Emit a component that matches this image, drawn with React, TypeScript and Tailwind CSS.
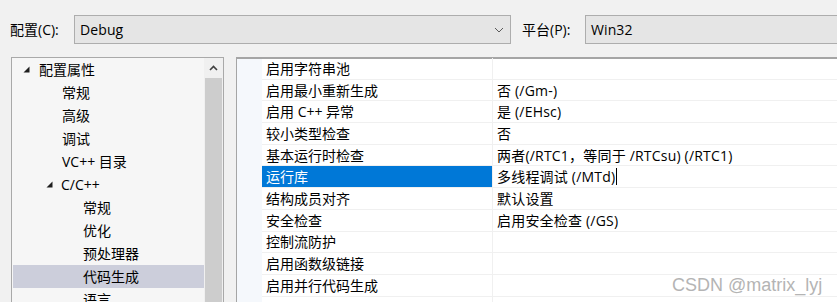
import React from 'react';

const FONT = { fontFamily: '"Open Sans", "Noto Sans CJK SC", sans-serif' };

type TreeItem = { label: string; level: number; open?: boolean; selected?: boolean };

const tree: TreeItem[] = [
  { label: '配置属性', level: 0, open: true },
  { label: '常规', level: 1 },
  { label: '高级', level: 1 },
  { label: '调试', level: 1 },
  { label: 'VC++ 目录', level: 1 },
  { label: 'C/C++', level: 1, open: true },
  { label: '常规', level: 2 },
  { label: '优化', level: 2 },
  { label: '预处理器', level: 2 },
  { label: '代码生成', level: 2, selected: true },
  { label: '语言', level: 2 },
];

const props: [string, string][] = [
  ['启用字符串池', ''],
  ['启用最小重新生成', '否 (/Gm-)'],
  ['启用 C++ 异常', '是 (/EHsc)'],
  ['较小类型检查', '否'],
  ['基本运行时检查', '两者(/RTC1，等同于 /RTCsu) (/RTC1)'],
  ['运行库', '多线程调试 (/MTd)'],
  ['结构成员对齐', '默认设置'],
  ['安全检查', '启用安全检查 (/GS)'],
  ['控制流防护', ''],
  ['启用函数级链接', ''],
  ['启用并行代码生成', ''],
  ['', ''],
];

function Triangle() {
  return (
    <svg width="7" height="7" viewBox="0 0 7 7" className="shrink-0">
      <polygon points="6.5,0.5 6.5,6.5 0.5,6.5" fill="#1e1e1e" />
    </svg>
  );
}

// combo box used for 配置 / 平台
function Combo({ value, width, arrow }: { value: string; width: string; arrow?: boolean }) {
  return (
    <div className={`flex h-[29px] items-center border border-[#adadad] bg-[#e5e5e5] pl-[5px] text-[14px] text-black ${width}`}>
      <span className="flex-1 tracking-[0.1px]">{value}</span>
      {arrow && (
        <svg width="10" height="6" viewBox="0 0 10 6" className="mr-[6px]">
          <polyline points="1,1 5,5 9,1" fill="none" stroke="#5a5a5a" strokeWidth="1" />
        </svg>
      )}
    </div>
  );
}

export default function App() {
  return (
    <div className="relative h-[302px] w-[837px] overflow-hidden bg-[#f1f1f1] text-[14px] text-black" style={FONT}>
      {/* top config row */}
      <div className="flex h-[45px] items-start pt-[15px]">
        <span className="ml-[10px] flex h-[29px] w-[64px] items-center">配置(C):</span>
        <Combo value="Debug" width="w-[437px]" arrow />
        <span className="ml-[11px] flex h-[29px] w-[63px] items-center">平台(P):</span>
        <Combo value="Win32" width="flex-1 -mr-[2px]" />
      </div>

      <div className="mt-[12px] flex h-[246px]">
        {/* tree */}
        <div className="ml-[11px] flex w-[213px] border border-[#a9a9a9] bg-[#f6f6f6]">
          <div className="w-[192px] pl-[1px]">
            {tree.map((t, i) => (
              <div
                key={i}
                className={`flex h-[23px] items-center ${t.selected ? 'bg-[#cccedb]' : ''}`}
                style={{ paddingLeft: t.level === 0 ? 10 : t.level === 1 ? (t.open ? 33 : 49) : 70 }}
              >
                {t.open && <Triangle />}
                <span className={t.open ? (t.level === 0 ? 'ml-[9px]' : 'ml-[8px]') : ''}>{t.label}</span>
              </div>
            ))}
          </div>
          <div className="flex w-[19px] flex-col bg-[#f0f0f0]">
            <div className="flex h-[20px] items-center justify-center">
              <svg width="9" height="6" viewBox="0 0 9 6">
                <polyline points="1,5 4.5,1.5 8,5" fill="none" stroke="#404040" strokeWidth="1.6" />
              </svg>
            </div>
            <div className="mx-[1px] flex-1 bg-[#cdcdcd]" />
          </div>
        </div>

        {/* property grid */}
        <div className="ml-[12px] flex flex-1 border-l border-t-2 border-[#a5a5a5] bg-white">
          <div className="w-[25px] bg-[#f5f8fc]" />
          <div className="-mt-px flex-1">
            {props.map(([name, value], i) => {
              const sel = name === '运行库';
              return (
                <div key={i} className="flex h-[21.7px] border-b border-[#f0f0f0]">
                  <div className={`flex w-[231px] items-center border-r border-[#f0f0f0] pl-[4px] ${sel ? 'bg-[#0078d7] text-white' : ''}`}>
                    {name}
                  </div>
                  <div className="flex flex-1 items-center pl-[4px] tracking-[0.2px]">
                    {value}
                    {sel && <span className="ml-[1px] h-[17px] w-[1px] bg-black" />}
                  </div>
                </div>
              );
            })}
          </div>
        </div>
      </div>

      <div className="absolute left-[672px] top-[272px] text-[18px] text-[#b4b4b4]" style={{ fontFamily: '"Liberation Sans", Arial, sans-serif' }}>
        CSDN @matrix_lyj
      </div>
    </div>
  );
}
